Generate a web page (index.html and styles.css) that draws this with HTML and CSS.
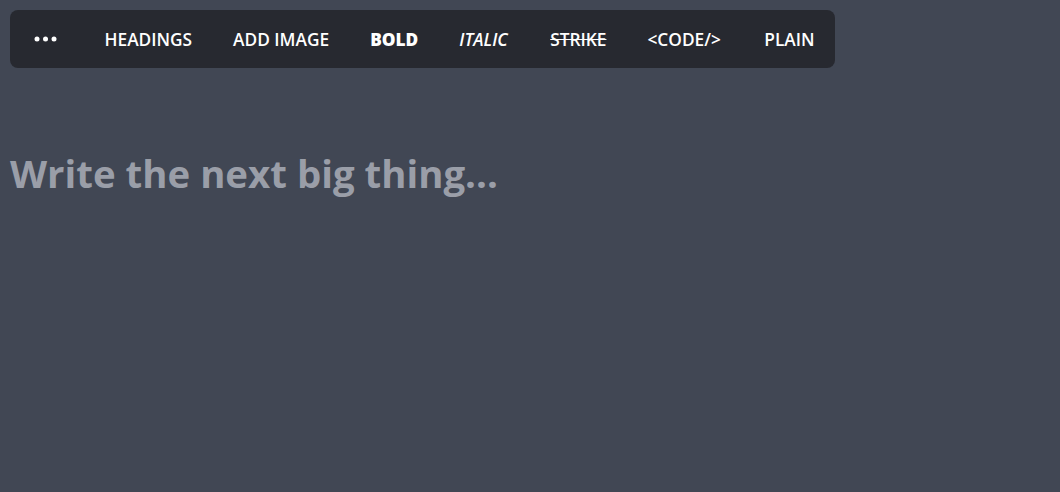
FILE: index.html
```html
<!DOCTYPE html>
<html lang="en">
<head>
<meta charset="utf-8">
<title>Editor</title>
<link rel="stylesheet" href="styles.css">
</head>
<body>
<div class="page">
  <nav class="toolbar">
    <button class="tool tool-more" aria-label="More">
      <svg width="24" height="6" viewBox="0 0 24 6"><circle cx="3" cy="3" r="2.5" fill="#fff"/><circle cx="11.5" cy="3" r="2.5" fill="#fff"/><circle cx="20" cy="3" r="2.5" fill="#fff"/></svg>
    </button>
    <button class="tool">HEADINGS</button>
    <button class="tool">ADD IMAGE</button>
    <button class="tool tool-bold">BOLD</button>
    <button class="tool tool-italic">ITALIC</button>
    <button class="tool tool-strike">STRIKE</button>
    <button class="tool">&lt;CODE/&gt;</button>
    <button class="tool">PLAIN</button>
  </nav>
  <h1 class="placeholder">Write the next big thing...</h1>
</div>
</body>
</html>
```
FILE: styles.css
```css
html, body {
  margin: 0;
  padding: 0;
  height: 100%;
}
body {
  background: #414754;
  font-family: "Open Sans", "Noto Sans", sans-serif;
}
.page {
  padding: 10px;
}
.toolbar {
  display: inline-flex;
  align-items: center;
  height: 58px;
  background: #272930;
  border-radius: 8px;
  padding: 2px 20px 0 4px;
  box-sizing: border-box;
}
.tool {
  background: none;
  border: none;
  color: #ffffff;
  font-family: inherit;
  font-size: 17.3px;
  font-weight: 600;
  padding: 0 20.5px;
  margin: 0;
  cursor: pointer;
  line-height: 20px;
}
.tool:last-child {
  padding-right: 0;
}
.tool-more {
  display: flex;
  align-items: center;
  padding: 0 26px 0 20px;
  height: 20px;
  margin-top: -2px;
}
.tool-bold {
  font-weight: 800;
}
.tool-italic {
  font-style: italic;
  padding-right: 22px;
}
.tool-strike {
  text-decoration: line-through;
}
.tool-code {
  padding-right: 22px;
}
.tool:nth-child(7) {
  padding-right: 22.5px;
}
.tool:last-child {
  padding-left: 21px;
}
.placeholder {
  margin: 83px 0 0 0;
  font-size: 38.4px;
  font-weight: 700;
  color: #9a9ea8;
  line-height: 44px;
}
```
